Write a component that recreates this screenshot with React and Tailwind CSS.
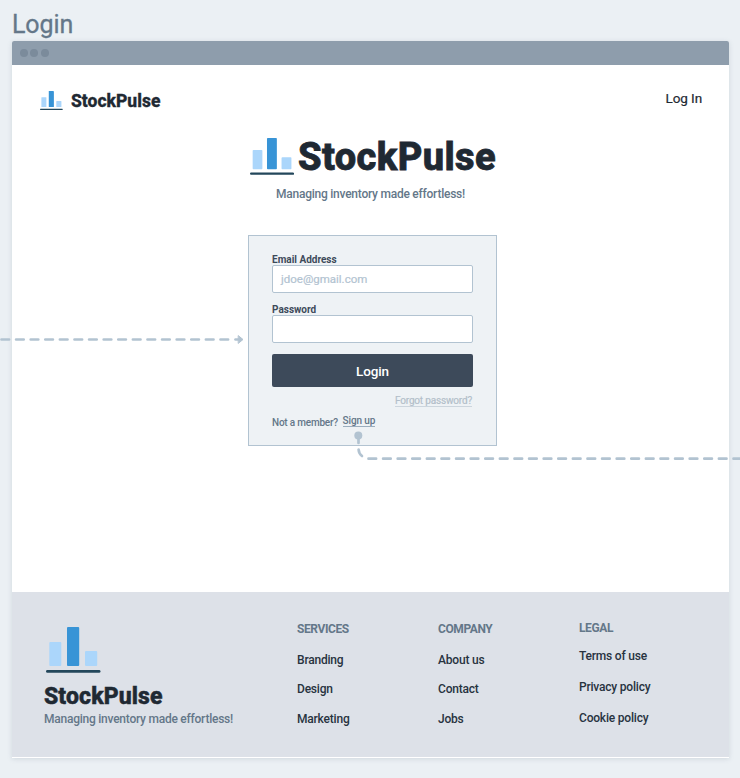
import React from "react";

function Logo({ className }) {
  return (
    <svg className={className} viewBox="0 0 55 46" preserveAspectRatio="none" aria-hidden="true">
      <rect x="3.3" y="15" width="12" height="24" rx="1" fill="#abd6fb" />
      <rect x="21" y="0" width="12.2" height="39" rx="1" fill="#3894d6" />
      <rect x="39" y="24" width="12.2" height="15" rx="1" fill="#abd6fb" />
      <rect x="0" y="43" width="54.5" height="2.8" rx="1.4" fill="#23475b" />
    </svg>
  );
}

function FooterColumn({ title, links, className }) {
  return (
    <div className={`flex flex-col items-start ${className}`}>
      <h3 className="text-[12px] font-bold leading-[16px] tracking-[-0.4px] text-[#647789]">{title}</h3>
      {links}
    </div>
  );
}

const link = "text-[12px] font-medium leading-[16px] tracking-[-0.2px] text-[#28333f]";

export default function App() {
  return (
    <div className="relative h-[778px] w-[740px] overflow-hidden whitespace-nowrap bg-[#ebf0f4] pt-[10px] pl-[12px] font-['Roboto',sans-serif]">
      <h2 className="h-[31px] text-[25px] leading-[29px] tracking-[-0.1px] text-[#647789] [-webkit-text-stroke:0.3px_#647789]">Login</h2>

      <div className="flex h-[717px] w-[717px] flex-col rounded-t-[2px] bg-white pb-[1px] shadow-[0_1px_5px_rgba(100,119,137,0.2)]">
        <div className="flex h-[24px] shrink-0 items-center gap-[2.7px] rounded-t-[2px] bg-[#8e9dac] pl-[7.5px]">
          <i className="size-[8px] rounded-full bg-[#7b8b9b]" />
          <i className="size-[8px] rounded-full bg-[#7b8b9b]" />
          <i className="size-[8px] rounded-full bg-[#7b8b9b]" />
        </div>

        <header className="flex h-[73px] shrink-0 items-start justify-between pr-[27px] pl-[28px]">
          <div className="flex pt-[26px]">
            <Logo className="h-[19px] w-[23px]" />
            <span className="ml-[8px] text-[17.5px] font-extrabold leading-[20px] text-[#1f2933] [-webkit-text-stroke:0.3px_#1f2933]">StockPulse</span>
          </div>
          <a className="mt-[23px] text-[13.5px] leading-[20px] tracking-[-0.1px] text-[#1f2933] [-webkit-text-stroke:0.2px_#1f2933]">Log In</a>
        </header>

        <main className="flex h-[454px] shrink-0 flex-col pl-[236px]">
          <div className="flex pl-[1.5px]">
            <Logo className="h-[37px] w-[44.5px]" />
            <h1 className="ml-[4px] h-[37px] text-[38px] font-extrabold leading-[39px] tracking-[0.38px] text-[#1f2933] [-webkit-text-stroke:0.8px_#1f2933]">StockPulse</h1>
          </div>
          <p className="mt-[11px] ml-[28px] text-[12px] font-medium leading-[16px] tracking-[-0.24px] text-[#647789]">
            Managing inventory made effortless!
          </p>

          <form className="mt-[33px] flex h-[211px] w-[249px] flex-col border border-[#b2c3d1] bg-[#eef2f5] pt-[17px] pl-[23px]">
            <label className="h-[12px] text-[10px] font-bold leading-[14px] text-[#3d4a5a]">Email Address</label>
            <div className="h-[28px] w-[201px] rounded-[2px] border border-[#b2c3d1] bg-white pl-[8px] text-[11.5px] leading-[27px] text-[#b2c3d1] [-webkit-text-stroke:0.2px_#b2c3d1]">
              jdoe@gmail.com
            </div>
            <label className="mt-[10px] h-[12px] text-[10px] font-bold leading-[14px] text-[#3d4a5a]">Password</label>
            <div className="h-[28px] w-[201px] rounded-[2px] border border-[#b2c3d1] bg-white" />
            <button
              type="button"
              className="mt-[11px] h-[33px] w-[201px] rounded-[2px] bg-[#3d4a5a] text-[13.5px] font-medium leading-[35px] tracking-[-0.1px] text-white"
            >
              Login
            </button>
            <a className="mt-[8px] mr-[24px] h-[12px] self-end border-b border-[#ccd5dd] text-[10px] leading-[12px] tracking-[-0.17px] text-[#b3bfca] [-webkit-text-stroke:0.2px_#b3bfca]">
              Forgot password?
            </a>
            <div className="mt-[8px] flex">
              <span className="pt-[2px] text-[10px] font-medium leading-[12px] tracking-[-0.2px] text-[#647789]">Not a member?</span>
              <a className="ml-[4.5px] h-[12px] border-b border-[#9badbd] text-[10px] font-medium leading-[12px] tracking-[-0.1px] text-[#647789]">
                Sign up
              </a>
            </div>
          </form>
        </main>

        <footer className="flex h-[165px] shrink-0 bg-[#dde1e8]">
          <div className="flex w-[285px] flex-col items-start pt-[35px] pl-[32px]">
            <Logo className="ml-[2px] h-[46px] w-[55px]" />
            <div className="mt-[11px] text-[23px] font-extrabold leading-[26px] tracking-[0.1px] text-[#1f2933] [-webkit-text-stroke:0.5px_#1f2933]">StockPulse</div>
            <p className="mt-[1px] text-[12px] font-medium leading-[16px] tracking-[-0.24px] text-[#647789]">
              Managing inventory made effortless!
            </p>
          </div>
          <FooterColumn
            className="w-[141px] pt-[29px]"
            title="SERVICES"
            links={
              <>
                <a className={`mt-[15px] ${link}`}>Branding</a>
                <a className={`mt-[13px] ${link}`}>Design</a>
                <a className={`mt-[14px] ${link}`}>Marketing</a>
              </>
            }
          />
          <FooterColumn
            className="w-[141px] pt-[29px]"
            title="COMPANY"
            links={
              <>
                <a className={`mt-[15px] ${link}`}>About us</a>
                <a className={`mt-[13px] ${link}`}>Contact</a>
                <a className={`mt-[14px] ${link}`}>Jobs</a>
              </>
            }
          />
          <FooterColumn
            className="w-[141px] pt-[28px]"
            title="LEGAL"
            links={
              <>
                <a className={`mt-[12px] ${link}`}>Terms of use</a>
                <a className={`mt-[15px] ${link}`}>Privacy policy</a>
                <a className={`mt-[15px] ${link}`}>Cookie policy</a>
              </>
            }
          />
        </footer>
      </div>

      {/* Flow connectors drawn over the frame */}
      <svg className="pointer-events-none absolute inset-0" width="740" height="778" fill="none" stroke="#b2c3d1" strokeWidth="2.7" strokeLinecap="round">
        <path d="M1.5 339.5H231" strokeDasharray="7.6 7" />
        <path d="M235.5 339.5H239" />
        <path d="M238.5 335.8L243 339.5L238.5 343.2Z" fill="#b2c3d1" strokeWidth="1" strokeLinejoin="round" />
        <circle cx="358.3" cy="435.5" r="4" fill="#b2c3d1" stroke="none" />
        <path d="M358.5 438V443" />
        <path d="M358.6 449.5Q358.8 453.5 362 456" />
        <path d="M368.5 458.7H740" strokeDasharray="7.6 7" />
      </svg>
    </div>
  );
}
